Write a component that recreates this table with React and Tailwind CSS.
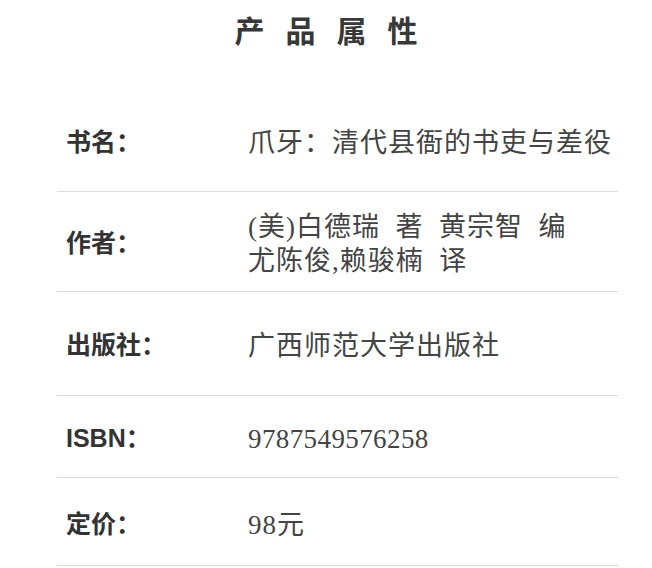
export default function App() {
  const rows = [
    { label: "书名：", h: "h-[100px] pt-[3px]", t: "tracking-[1px]", value: ["爪牙：清代县衙的书吏与差役"] },
    { label: "作者：", h: "h-[100px] pt-[5px]", t: "tracking-[1px]", value: ["(美)白德瑞\u00a0\u00a0著\u00a0\u00a0黄宗智\u00a0\u00a0编", "尤陈俊,赖骏楠\u00a0\u00a0译"] },
    { label: "出版社：", h: "h-[104px] pt-[4px]", t: "tracking-[1px]", value: ["广西师范大学出版社"] },
    { label: "ISBN：", h: "h-[82px] pt-[5px]", t: "tracking-[0.4px]", value: ["9787549576258"] },
    { label: "定价：", h: "h-[88px] pt-[6px]", t: "tracking-[1px]", value: ["98元"] },
  ];
  return (
    <div className="w-[652px] h-[568px] bg-white overflow-hidden">
      <div className="h-[92px] pt-[12px]">
        <div className="flex justify-center gap-[21px] text-[30px] leading-[40px] font-bold text-[#383838] [font-family:'Liberation_Serif','Noto_Sans_CJK_SC',serif]">
          <span>产</span><span>品</span><span>属</span><span>性</span>
        </div>
      </div>
      <div className="mx-[57px] w-[561px]">
        {rows.map((r, i) => (
          <div
            key={i}
            className={`flex items-center border-b border-[#dcdcdc] ${r.h}`}
          >
            <div className="w-[191px] pl-[9px] text-[25px] font-bold text-[#333] [font-family:'Liberation_Sans','Noto_Sans_CJK_SC',sans-serif]">
              {r.label}
            </div>
            <div className={`flex-1 text-[27px] leading-[34px] text-[#444] [font-family:'Liberation_Serif','Noto_Sans_CJK_SC',serif] ${r.t}`}>
              {r.value.map((v, j) => (
                <div key={j} className="whitespace-nowrap">{v}</div>
              ))}
            </div>
          </div>
        ))}
      </div>
    </div>
  );
}
